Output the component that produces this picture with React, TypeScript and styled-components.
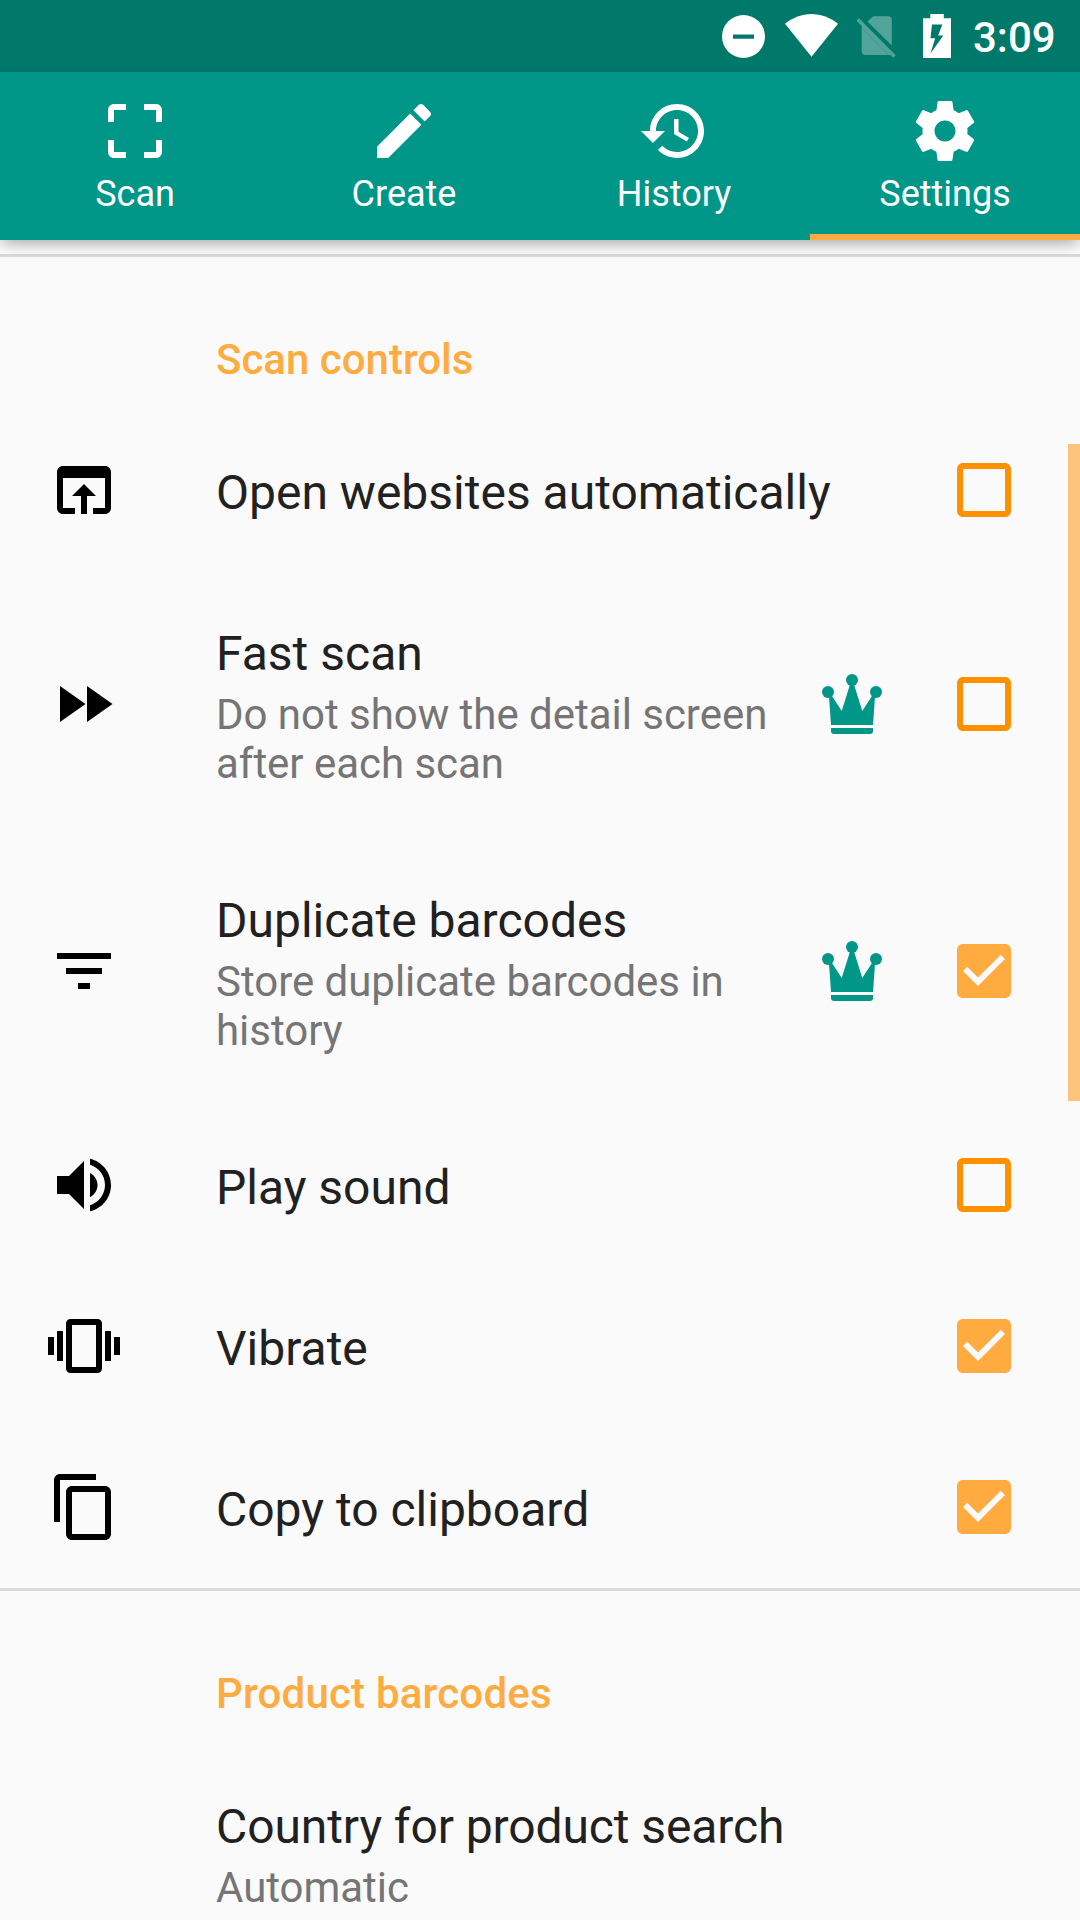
import React from "react";
import styled, { createGlobalStyle } from "styled-components";

const teal = "#009688";
const accent = "#ffab40";

const GlobalStyle = createGlobalStyle`
  *, *::before, *::after { box-sizing: border-box; }
  html, body { margin: 0; padding: 0; background: #fafafa; }
  body { font-family: Roboto, "Noto Sans", sans-serif; overflow: hidden; }
`;

const Screen = styled.div`
  position: relative;
  display: flex;
  flex-direction: column;
  width: 1080px;
  height: 1920px;
  overflow: hidden;
  background: #fafafa;
`;

const StatusBar = styled.header`
  display: flex;
  flex: none;
  justify-content: flex-end;
  align-items: center;
  gap: 16px;
  height: 72px;
  padding-right: 24px;
  background: #00796b;
  color: #fff;
`;

const StatusGlyph = styled.svg`
  display: block;
  flex: none;
  height: 72px;
  fill: currentColor;
`;

const Clock = styled.time`
  width: 83px;
  margin-left: 5px;
  padding-top: 3px;
  font-size: 42px;
  font-weight: 500;
  line-height: 49px;
  white-space: nowrap;
`;

const Tabs = styled.nav`
  position: relative;
  z-index: 1;
  display: grid;
  flex: none;
  grid-template-columns: repeat(4, 1fr);
  height: 168px;
  background: ${teal};
  box-shadow: 0 5px 14px -2px rgba(0, 0, 0, 0.34);
`;

const Tab = styled.button<{ $active?: boolean }>`
  display: flex;
  flex-direction: column;
  align-items: center;
  padding: 23px 0 0;
  border: 0;
  border-bottom: 6px solid ${(p) => (p.$active ? accent : "transparent")};
  background: none;
  color: #fff;
  font-family: inherit;
  font-size: 36px;
  line-height: 42px;

  &:nth-child(2),
  &:nth-child(3) {
    padding-right: 2px;
  }
`;

const TabLabel = styled.span`
  margin-top: 6px;
`;

const Glyph = styled.svg`
  display: block;
  flex: none;
  width: 72px;
  height: 72px;
  fill: currentColor;
`;

const List = styled.main`
  display: flex;
  flex: none;
  flex-direction: column;
  padding-top: 14px;
`;

const Category = styled.h2<{ $tracking?: number }>`
  height: 156px;
  margin: 0;
  padding: 78px 0 0 216px;
  border-top: 3px solid #dadada;
  color: ${accent};
  font-size: 42px;
  font-weight: 500;
  line-height: 49px;
  letter-spacing: ${(p) => p.$tracking ?? 0}px;
`;

const Row = styled.div`
  display: flex;
  align-items: center;
  padding: 0 60px 0 48px;
`;

const Slot = styled.div<{ $color?: string; $gap?: number }>`
  flex: none;
  width: 72px;
  height: 73px;
  margin-left: ${(p) => p.$gap ?? 0}px;
  color: ${(p) => p.$color ?? "#000"};
`;

const Copy = styled.div`
  flex: 1;
  min-width: 0;
  padding: 48px 0;
  margin-left: 96px;
`;

const Title = styled.div<{ $tracking?: number }>`
  padding-top: 4px;
  color: #212121;
  font-size: 48px;
  line-height: 61px;
  letter-spacing: ${(p) => p.$tracking ?? 0}px;
  white-space: nowrap;
`;

const Summary = styled.div`
  padding: 6px 0 2px;
  color: #757575;
  font-size: 42px;
  line-height: 49px;
  letter-spacing: -0.03px;
`;

const ScrollThumb = styled.div`
  position: absolute;
  top: 444px;
  right: 0;
  width: 12px;
  height: 657px;
  background: #fdc47c;
`;

const paths = {
  scan: "M3 5v4h2V5h4V3H5c-1.1 0-2 .9-2 2zm2 10H3v4c0 1.1.9 2 2 2h4v-2H5v-4zm14 4h-4v2h4c1.1 0 2-.9 2-2v-4h-2v4zm0-16h-4v2h4v4h2V5c0-1.1-.9-2-2-2z",
  create:
    "M3 17.25V21h3.75L17.81 9.94l-3.75-3.75L3 17.25zM20.71 7.04c.39-.39.39-1.02 0-1.41l-2.34-2.34c-.39-.39-1.02-.39-1.41 0l-1.83 1.83 3.75 3.75 1.83-1.83z",
  history:
    "M13 3c-4.97 0-9 4.03-9 9H1l3.89 3.89.07.14L9 12H6c0-3.87 3.13-7 7-7s7 3.13 7 7-3.13 7-7 7c-1.93 0-3.68-.79-4.94-2.06l-1.42 1.42C8.27 19.99 10.51 21 13 21c4.97 0 9-4.03 9-9s-4.03-9-9-9zm-1 5v5l4.28 2.54.72-1.21-3.5-2.08V8H12z",
  settings:
    "M19.43 12.98c.04-.32.07-.64.07-.98s-.03-.66-.07-.98l2.11-1.65c.19-.15.24-.42.12-.64l-2-3.46c-.12-.22-.39-.3-.61-.22l-2.49 1c-.52-.4-1.08-.73-1.69-.98l-.38-2.65C14.46 2.18 14.25 2 14 2h-4c-.25 0-.46.18-.49.42l-.38 2.65c-.61.25-1.17.59-1.69.98l-2.49-1c-.23-.09-.49 0-.61.22l-2 3.46c-.13.22-.07.49.12.64l2.11 1.65c-.04.32-.07.65-.07.98s.03.66.07.98l-2.11 1.65c-.19.15-.24.42-.12.64l2 3.46c.12.22.39.3.61.22l2.49-1c.52.4 1.08.73 1.69.98l.38 2.65c.03.24.24.42.49.42h4c.25 0 .46-.18.49-.42l.38-2.65c.61-.25 1.17-.59 1.69-.98l2.49 1c.23.09.49 0 .61-.22l2-3.46c.12-.22.07-.49-.12-.64l-2.11-1.65zM12 15.5c-1.93 0-3.5-1.57-3.5-3.5s1.57-3.5 3.5-3.5 3.5 1.57 3.5 3.5-1.57 3.5-3.5 3.5z",
  browser:
    "M19 4H5c-1.11 0-2 .9-2 2v12c0 1.1.89 2 2 2h4v-2H5V8h14v10h-4v2h4c1.1 0 2-.9 2-2V6c0-1.1-.89-2-2-2zm-7 6l-4 4h3v6h2v-6h3l-4-4z",
  forward: "M4 18l8.5-6L4 6v12zm9-12v12l8.5-6L13 6z",
  filter: "M10 18h4v-2h-4v2zM3 6v2h18V6H3zm3 7h12v-2H6v2z",
  volume:
    "M3 9v6h4l5 5V4L7 9H3zm13.5 3c0-1.77-1.02-3.29-2.5-4.03v8.05c1.48-.73 2.5-2.25 2.5-4.02zM14 3.23v2.06c2.89.86 5 3.54 5 6.71s-2.11 5.85-5 6.71v2.06c4.01-.91 7-4.49 7-8.77s-2.99-7.86-7-8.77z",
  vibrate:
    "M0 15h2V9H0v6zm3 2h2V7H3v10zm19-8v6h2V9h-2zm-3 8h2V7h-2v10zM16.5 3h-9C6.67 3 6 3.67 6 4.5v15c0 .83.67 1.5 1.5 1.5h9c.83 0 1.5-.67 1.5-1.5v-15c0-.83-.67-1.5-1.5-1.5zM16 19H8V5h8v14z",
  copy: "M16 1H4c-1.1 0-2 .9-2 2v14h2V3h12V1zm3 4H8c-1.1 0-2 .9-2 2v14c0 1.1.9 2 2 2h11c1.1 0 2-.9 2-2V7c0-1.1-.9-2-2-2zm0 16H8V7h11v14z",
  checked:
    "M19 3H5c-1.11 0-2 .9-2 2v14c0 1.1.89 2 2 2h14c1.11 0 2-.9 2-2V5c0-1.1-.89-2-2-2zm-9 14l-5-5 1.41-1.41L10 14.17l7.59-7.59L19 8l-9 9z",
  unchecked:
    "M19 5v14H5V5h14m0-2H5c-1.1 0-2 .9-2 2v14c0 1.1.9 2 2 2h14c1.1 0 2-.9 2-2V5c0-1.1-.9-2-2-2z",
};

type IconName = keyof typeof paths;

const Icon = ({ name }: { name: IconName }) => (
  <Glyph viewBox="0 0 24 24" aria-hidden>
    <path d={paths[name]} />
  </Glyph>
);

const Crown = () => (
  <Glyph viewBox="0 0 72 72" aria-label="Premium">
    <circle cx="12" cy="24" r="6" />
    <circle cx="36" cy="12" r="6" />
    <circle cx="60" cy="24" r="6" />
    <path d="M13 28.5L15.7 27.5 25.7 43 34 16.5h4L46.3 43 56.3 27.5 59 28.5 57 57H15z" />
    <path d="M15 60h42v3q0 3-3 3H18q-3 0-3-3z" />
  </Glyph>
);

const tabs: { icon: IconName; label: string; active?: boolean }[] = [
  { icon: "scan", label: "Scan" },
  { icon: "create", label: "Create" },
  { icon: "history", label: "History" },
  { icon: "settings", label: "Settings", active: true },
];

interface Preference {
  icon?: IconName;
  title: string;
  tracking?: number;
  summary?: string;
  premium?: boolean;
  checked?: boolean;
}

const scanControls: Preference[] = [
  { icon: "browser", title: "Open websites automatically", checked: false },
  {
    icon: "forward",
    title: "Fast scan",
    summary: "Do not show the detail screen after each scan",
    premium: true,
    checked: false,
  },
  {
    icon: "filter",
    title: "Duplicate barcodes",
    summary: "Store duplicate barcodes in history",
    premium: true,
    checked: true,
  },
  { icon: "volume", title: "Play sound", checked: false },
  { icon: "vibrate", title: "Vibrate", checked: true },
  { icon: "copy", title: "Copy to clipboard", checked: true },
];

const PreferenceRow = ({ icon, title, tracking, summary, premium, checked }: Preference) => (
  <Row>
    <Slot>{icon && <Icon name={icon} />}</Slot>
    <Copy>
      <Title $tracking={tracking}>{title}</Title>
      {summary && <Summary>{summary}</Summary>}
    </Copy>
    {premium && (
      <Slot $color={teal} $gap={24}>
        <Crown />
      </Slot>
    )}
    {checked !== undefined && (
      <Slot
        $color={checked ? accent : "#ff9100"}
        $gap={60}
        role="checkbox"
        aria-checked={checked}
        aria-label={title}
      >
        <Icon name={checked ? "checked" : "unchecked"} />
      </Slot>
    )}
  </Row>
);

export default function App() {
  return (
    <>
      <GlobalStyle />
      <Screen>
        <StatusBar>
          <StatusGlyph width="48" viewBox="0 0 48 72">
            <path
              fillRule="evenodd"
              d="M23.5 15a21.5 21.5 0 1 0 0 43a21.5 21.5 0 1 0 0-43zM13 34.5h21v4.3H13z"
            />
          </StatusGlyph>
          <StatusGlyph width="56" viewBox="0 0 56 72">
            <path d="M1 23.7C9 17.5 18 14 27.5 14S46 17.5 54 23.7L27.5 56.7z" />
          </StatusGlyph>
          <StatusGlyph width="40" viewBox="0 0 40 72" opacity="0.32">
            <path d="M11.5 21.5L16 17.2Q17 16.3 18.5 16.3H32Q35.8 16.3 35.8 20V45.6z" />
            <path d="M5.7 27.9L32.6 55H9.4Q5.7 55 5.7 51.3z" />
            <path d="M.5 20.8L3 18.3 39.7 55.2 37.2 57.8 34.4 55H32.6L5.7 27.9V26z" />
          </StatusGlyph>
          <StatusGlyph width="40" viewBox="0 0 40 72">
            <path
              fillRule="evenodd"
              d="M18.3 14H31.8V18.3H39V58H11V18.3H18.3zM20 24.5L18.5 38.3H23.2L18.5 53.5 31.3 35.5H26.2L30.3 24.5z"
            />
          </StatusGlyph>
          <Clock>3:09</Clock>
        </StatusBar>
        <Tabs>
          {tabs.map((t) => (
            <Tab key={t.label} $active={t.active}>
              <Icon name={t.icon} />
              <TabLabel>{t.label}</TabLabel>
            </Tab>
          ))}
        </Tabs>
        <List>
          <Category>Scan controls</Category>
          {scanControls.map((p) => (
            <PreferenceRow key={p.title} {...p} />
          ))}
          <Category $tracking={0.2}>Product barcodes</Category>
          <PreferenceRow title="Country for product search" tracking={-0.1} summary="Automatic" />
        </List>
        <ScrollThumb />
      </Screen>
    </>
  );
}
